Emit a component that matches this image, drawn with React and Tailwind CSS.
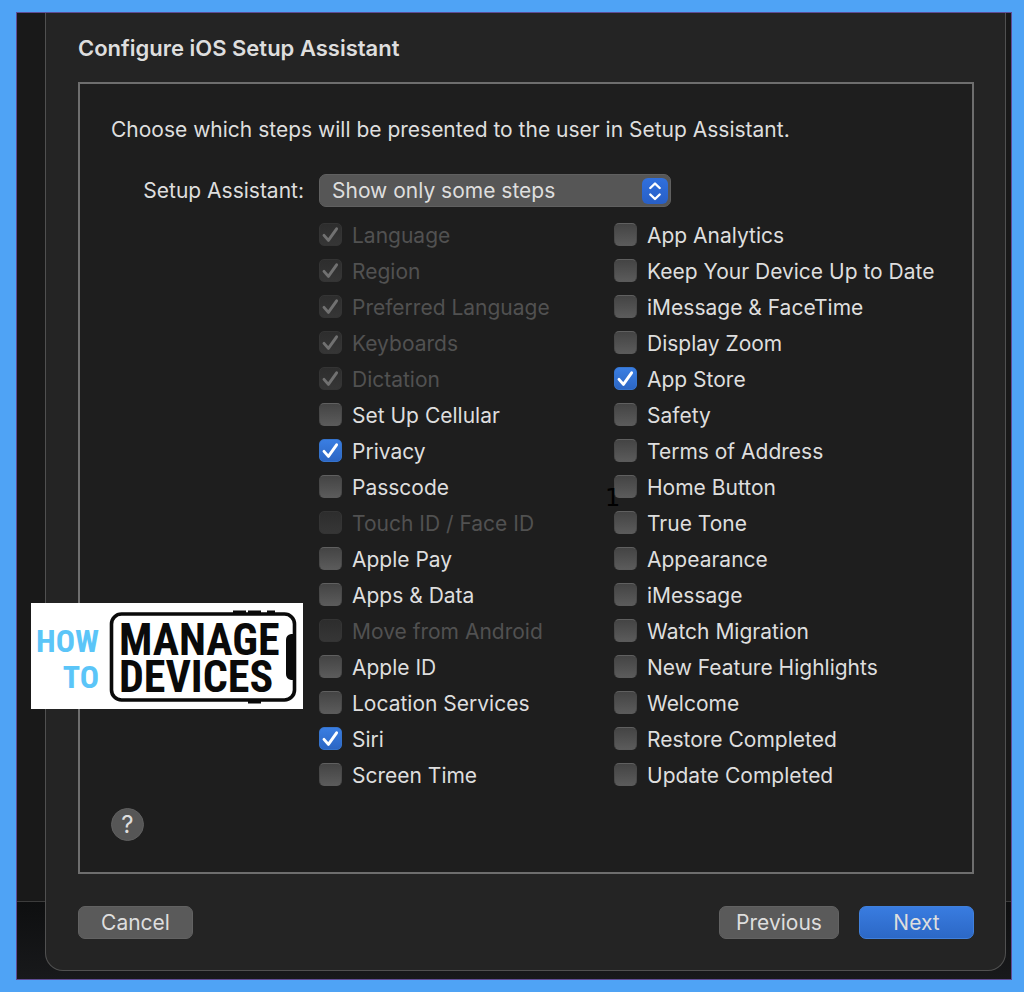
import { useState } from "react";

const leftSteps = [
  { name: "Language", checked: true, disabled: true },
  { name: "Region", checked: true, disabled: true },
  { name: "Preferred Language", checked: true, disabled: true },
  { name: "Keyboards", checked: true, disabled: true },
  { name: "Dictation", checked: true, disabled: true },
  { name: "Set Up Cellular" },
  { name: "Privacy", checked: true },
  { name: "Passcode" },
  { name: "Touch ID / Face ID", disabled: true },
  { name: "Apple Pay" },
  { name: "Apps & Data" },
  { name: "Move from Android", disabled: true },
  { name: "Apple ID" },
  { name: "Location Services" },
  { name: "Siri", checked: true },
  { name: "Screen Time" },
];

const rightSteps = [
  { name: "App Analytics" },
  { name: "Keep Your Device Up to Date" },
  { name: "iMessage & FaceTime" },
  { name: "Display Zoom" },
  { name: "App Store", checked: true },
  { name: "Safety" },
  { name: "Terms of Address" },
  { name: "Home Button" },
  { name: "True Tone" },
  { name: "Appearance" },
  { name: "iMessage" },
  { name: "Watch Migration" },
  { name: "New Feature Highlights" },
  { name: "Welcome" },
  { name: "Restore Completed" },
  { name: "Update Completed" },
];

function Step({ step, onToggle }) {
  return (
    <label
      className={`flex h-9 items-center gap-[10px] whitespace-nowrap ${
        step.disabled ? "text-[#515151]" : "text-[#dedede]"
      }`}
    >
      <span className="mb-1 grid shrink-0">
        <input
          type="checkbox"
          checked={!!step.checked}
          disabled={step.disabled}
          onChange={onToggle}
          className="peer col-start-1 row-start-1 size-[23px] appearance-none rounded-[5px] border border-t-[#606060] border-x-[#484848] border-b-[#5a5a5a] bg-linear-to-b from-[#444444] to-[#5b5b5b] checked:border-[#3573cc] checked:from-[#3a7ee2] checked:to-[#2c66c4] disabled:border-[#343434] disabled:from-[#2d2d2d] disabled:to-[#363636]"
        />
        <svg
          viewBox="0 0 23 23"
          className="pointer-events-none invisible col-start-1 row-start-1 size-[23px] text-white peer-checked:visible peer-disabled:text-[#717171]"
          fill="none"
          stroke="currentColor"
          strokeWidth="2.9"
          strokeLinecap="round"
          strokeLinejoin="round"
        >
          <path d="M5 12.4 9.4 17.4 17.6 5.8" />
        </svg>
      </span>
      {step.name}
    </label>
  );
}

function StepColumn({ initial }) {
  const [steps, setSteps] = useState(initial);

  const toggle = (index) => {
    setSteps(steps.map((s, i) => (i === index ? { ...s, checked: !s.checked } : s)));
  };

  return (
    <div>
      {steps.map((s, i) => (
        <Step key={s.name} step={s} onToggle={() => toggle(i)} />
      ))}
    </div>
  );
}

function Logo() {
  return (
    <svg
      viewBox="0 0 272 106"
      className="absolute left-[31px] top-[603px] h-[106px] w-[272px] bg-white"
      role="img"
      aria-label="How to Manage Devices"
      fontFamily="'Roboto Condensed', Roboto, sans-serif"
      fontWeight="700"
    >
      <g fill="#5bc5f8" fontSize="32" textAnchor="end">
        <text x="68" y="49">HOW</text>
        <text x="68" y="85">TO</text>
      </g>
      <rect x="80.5" y="11" width="183" height="86" rx="10" fill="none" stroke="#0a0a0a" strokeWidth="3.6" />
      <path
        d="M202 7.5h13v3h-13zM217 7.5h13v3h-13zM236 7.5h8v3h-8zM217 98h13v2.5h-13z"
        fill="#0a0a0a"
      />
      <path d="M264 31h-4q-5 1-5 6v34q0 5 5 6h4z" fill="#0a0a0a" />
      <g fill="#0a0a0a" fontSize="44">
        <text x="88" y="52">MANAGE</text>
        <text x="88" y="89">DEVICES</text>
      </g>
    </svg>
  );
}

export default function App() {
  const [mode, setMode] = useState("some");

  return (
    <div className="relative flex min-h-screen flex-col bg-[#4fa3f5] py-3 pl-4 pr-3 font-['Inter',sans-serif] text-[21px] leading-7 text-[#dedede]">
      <div className="relative flex flex-1 flex-col border border-[#5f4c94] bg-[#191919] pb-2 pl-7 pr-[5px]">

        {/* window behind the sheet */}
        <div className="absolute inset-x-0 bottom-0 h-[78px] border-t border-[#3c3c3c] bg-linear-to-b from-[#0e0f10] to-[#18191b]" />

        {/* sheet */}
        <main className="relative flex flex-1 flex-col rounded-b-[18px] border border-t-0 border-[#505050] bg-[#242424] pb-[31px] pl-8 pr-[31px] pt-[21px]">
          <h1 className="text-[22px] font-semibold leading-7">Configure iOS Setup Assistant</h1>

          <section className="mt-5 border-2 border-[#6e6e6e] bg-[#1e1e1e] px-[31px] pb-[31px] pt-8">
            <p>Choose which steps will be presented to the user in Setup Assistant.</p>

            <div className="mt-[30px] grid grid-cols-[193px_1fr] gap-x-[15px]">
              <label htmlFor="mode" className="self-center text-right">
                Setup Assistant:
              </label>
              <div className="grid w-[352px] items-center">
                <select
                  id="mode"
                  value={mode}
                  onChange={(e) => setMode(e.target.value)}
                  className="col-start-1 row-start-1 h-[33px] appearance-none rounded-[7px] border border-[#606060] bg-[#565656] pl-3"
                >
                  <option value="all">Show all steps</option>
                  <option value="some">Show only some steps</option>
                  <option value="none">Don't show any steps</option>
                </select>
                <svg
                  viewBox="0 0 26 26"
                  className="pointer-events-none col-start-1 row-start-1 mr-[3px] size-[26px] justify-self-end rounded-md bg-linear-to-b from-[#3070de] to-[#285fc6]"
                  fill="none"
                  stroke="#fff"
                  strokeWidth="2.4"
                  strokeLinecap="round"
                  strokeLinejoin="round"
                >
                  <path d="M8.3 10 13 5.5 17.7 10M8.3 16.5 13 21 17.7 16.5" />
                </svg>
              </div>

              <div className="col-start-2 mt-[11px] grid grid-cols-[295px_1fr]">
                <StepColumn initial={leftSteps} />
                <StepColumn initial={rightSteps} />
              </div>
            </div>

            <button
              aria-label="Help"
              className="mt-[14px] flex size-[33px] items-center justify-center rounded-full border border-[#606060] bg-[#565656] text-2xl"
            >
              ?
            </button>
          </section>

          {/* footer buttons */}
          <div className="mt-auto flex gap-5">
            <button className="mr-auto h-[33px] w-[115px] rounded-[7px] border border-[#626262] bg-[#5a5a5a]">
              Cancel
            </button>
            <button className="h-[33px] w-[120px] rounded-[7px] border border-[#626262] bg-[#5a5a5a]">
              Previous
            </button>
            <button className="h-[33px] w-[115px] rounded-[7px] border border-[#4080dc] bg-linear-to-b from-[#397ce0] to-[#2c68c6]">
              Next
            </button>
          </div>
        </main>
      </div>

      <Logo />
      <span className="absolute left-[605px] top-[482px] font-['DejaVu_Sans'] text-2xl text-black">1</span>
    </div>
  );
}
